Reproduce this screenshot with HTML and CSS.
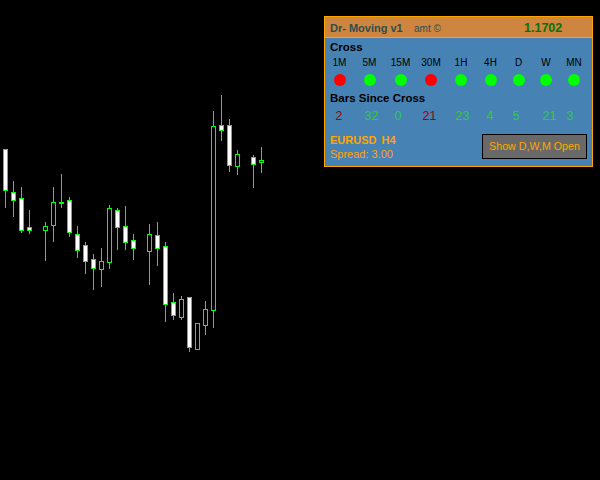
FILE: index.html
```html
<!DOCTYPE html>
<html>
<head>
<meta charset="utf-8">
<link rel="stylesheet" href="styles.css">
</head>
<body>
<svg class="chart" width="600" height="480" viewBox="0 0 600 480" xmlns="http://www.w3.org/2000/svg">
  <g stroke="#00ff00" stroke-width="1">
    <!-- wicks -->
    <line x1="5.5" y1="149" x2="5.5" y2="208"/>
    <line x1="13.5" y1="181" x2="13.5" y2="217"/>
    <line x1="21.5" y1="187" x2="21.5" y2="233"/>
    <line x1="29.5" y1="210" x2="29.5" y2="234"/>
    <line x1="45.5" y1="222" x2="45.5" y2="261"/>
    <line x1="53.5" y1="187" x2="53.5" y2="242"/>
    <line x1="61.5" y1="174" x2="61.5" y2="208"/>
    <line x1="69.5" y1="197" x2="69.5" y2="237"/>
    <line x1="77.5" y1="226" x2="77.5" y2="258"/>
    <line x1="85.5" y1="242" x2="85.5" y2="274"/>
    <line x1="93.5" y1="254" x2="93.5" y2="290"/>
    <line x1="101.5" y1="248" x2="101.5" y2="287"/>
    <line x1="109.5" y1="205" x2="109.5" y2="269"/>
    <line x1="117.5" y1="208" x2="117.5" y2="250"/>
    <line x1="125.5" y1="206" x2="125.5" y2="250"/>
    <line x1="133.5" y1="234" x2="133.5" y2="260"/>
    <line x1="149.5" y1="224" x2="149.5" y2="285"/>
    <line x1="157.5" y1="222" x2="157.5" y2="266"/>
    <line x1="165.5" y1="242" x2="165.5" y2="322"/>
    <line x1="173.5" y1="293" x2="173.5" y2="320"/>
    <line x1="181.5" y1="296" x2="181.5" y2="320"/>
    <line x1="189.5" y1="297" x2="189.5" y2="352"/>
    <line x1="197.5" y1="323" x2="197.5" y2="350"/>
    <line x1="205.5" y1="301" x2="205.5" y2="335"/>
    <line x1="213.5" y1="111" x2="213.5" y2="328"/>
    <line x1="221.5" y1="95" x2="221.5" y2="141"/>
    <line x1="229.5" y1="119" x2="229.5" y2="172"/>
    <line x1="237.5" y1="150" x2="237.5" y2="175"/>
    <line x1="253.5" y1="155" x2="253.5" y2="188"/>
    <line x1="261.5" y1="147" x2="261.5" y2="173"/>
    <!-- bodies: white = down, black = up -->
    <rect x="3.5" y="149.5" width="4" height="41" fill="#ffffff"/>
    <rect x="11.5" y="192.5" width="4" height="8" fill="#ffffff"/>
    <rect x="19.5" y="198.5" width="4" height="32" fill="#ffffff"/>
    <rect x="27.5" y="227.5" width="4" height="3" fill="#ffffff"/>
    <rect x="43.5" y="226.5" width="4" height="4" fill="#000000"/>
    <rect x="51.5" y="202.5" width="4" height="23" fill="#000000"/>
    <rect x="59.5" y="202.5" width="4" height="1" fill="#00ff00"/>
    <rect x="67.5" y="200.5" width="4" height="32" fill="#ffffff"/>
    <rect x="75.5" y="234.5" width="4" height="16" fill="#ffffff"/>
    <rect x="83.5" y="245.5" width="4" height="16" fill="#ffffff"/>
    <rect x="91.5" y="259.5" width="4" height="9" fill="#ffffff"/>
    <rect x="99.5" y="261.5" width="4" height="8" fill="#000000"/>
    <rect x="107.5" y="208.5" width="4" height="54" fill="#000000"/>
    <rect x="115.5" y="210.5" width="4" height="17" fill="#ffffff"/>
    <rect x="123.5" y="226.5" width="4" height="16" fill="#ffffff"/>
    <rect x="131.5" y="240.5" width="4" height="8" fill="#ffffff"/>
    <rect x="147.5" y="234.5" width="4" height="17" fill="#000000"/>
    <rect x="155.5" y="235.5" width="4" height="13" fill="#ffffff"/>
    <rect x="163.5" y="246.5" width="4" height="58" fill="#ffffff"/>
    <rect x="171.5" y="302.5" width="4" height="13" fill="#ffffff"/>
    <rect x="179.5" y="299.5" width="4" height="18" fill="#000000"/>
    <rect x="187.5" y="297.5" width="4" height="50" fill="#ffffff"/>
    <rect x="195.5" y="323.5" width="4" height="26" fill="#000000"/>
    <rect x="203.5" y="309.5" width="4" height="16" fill="#000000"/>
    <rect x="211.5" y="126.5" width="4" height="184" fill="#000000"/>
    <rect x="219.5" y="125.5" width="4" height="5" fill="#ffffff"/>
    <rect x="227.5" y="125.5" width="4" height="40" fill="#ffffff"/>
    <rect x="235.5" y="154.5" width="4" height="12" fill="#000000"/>
    <rect x="251.5" y="157.5" width="4" height="7" fill="#ffffff"/>
    <rect x="259.5" y="160.5" width="4" height="2" fill="#000000"/>
  </g>
</svg>

<div class="panel">
  <div class="head">
    <span class="title">Dr- Moving v1</span>
    <span class="amt">amt ©</span>
    <span class="price">1.1702</span>
  </div>
  <div class="body">
    <div class="sec">Cross</div>
    <div class="tf labels">
      <span>1M</span><span>5M</span><span>15M</span><span>30M</span><span>1H</span><span>4H</span><span>D</span><span>W</span><span>MN</span>
    </div>
    <div class="tf dots">
      <span><i class="dot red"></i></span>
      <span><i class="dot green"></i></span>
      <span><i class="dot green"></i></span>
      <span><i class="dot red"></i></span>
      <span><i class="dot green"></i></span>
      <span><i class="dot green"></i></span>
      <span><i class="dot green"></i></span>
      <span><i class="dot green"></i></span>
      <span><i class="dot green"></i></span>
    </div>
    <div class="sec sec2">Bars Since Cross</div>
    <div class="nums">
      <span class="dn">2</span><span class="up">32</span><span class="up">0</span><span class="dn">21</span><span class="up">23</span><span class="up">4</span><span class="up">5</span><span class="up">21</span><span class="up">3</span>
    </div>
    <div class="foot">
      <div class="sym">
        <div class="pair">EURUSD H4</div>
        <div class="spread">Spread: 3.00</div>
      </div>
      <button class="btn">Show D,W,M Open</button>
    </div>
  </div>
</div>
</body>
</html>
```

FILE: styles.css
```css
html, body {
  margin: 0;
  padding: 0;
  background: #000000;
  width: 600px;
  height: 480px;
  overflow: hidden;
  font-family: "Liberation Sans", Arial, sans-serif;
}

.chart {
  display: block;
}

.panel {
  position: absolute;
  left: 324px;
  top: 16px;
  width: 267px;
  height: 149px;
  border: 1px solid #ffa500;
  background: #4682b4;
  display: flex;
  flex-direction: column;
}

.head {
  box-sizing: border-box;
  border-bottom: 1px solid #ffa500;
  height: 21px;
  background: #cd853f;
  display: flex;
  align-items: baseline;
  padding: 3px 0 0 5px;
  line-height: 16px;
  color: #2f4f4f;
}

.title {
  width: 84px;
  font-size: 11px;
  font-weight: bold;
}

.amt {
  width: 110px;
  font-size: 10px;
}

.price {
  font-size: 12.5px;
  font-weight: bold;
  color: #0b700b;
}

.body {
  display: flex;
  flex-direction: column;
  padding-top: 2px;
}

.sec {
  padding-left: 5px;
  font-size: 11.5px;
  font-weight: bold;
  line-height: 14px;
  color: #000000;
}

.sec2 {
  margin-top: 5px;
}

.tf {
  display: grid;
  grid-template-columns: 29px 31px 31px 30px 30px 29px 27px 28px 28px;
}

.tf span {
  display: flex;
  justify-content: center;
}

.labels {
  margin-top: 3px;
  font-size: 10px;
  line-height: 12px;
  color: #000000;
}

.dots {
  margin-top: 5px;
  height: 12px;
}

.dot {
  display: block;
  width: 12px;
  height: 12px;
  border-radius: 50%;
}

.dot.red { background: #ff0000; }
.dot.green { background: #00ff00; }

.nums {
  margin-top: 4px;
  padding-left: 10.5px;
  display: grid;
  grid-template-columns: 29px 30px 28px 33px 31px 26px 30px 24px 20px;
  font-size: 12.5px;
  line-height: 14px;
}

.dn { color: #a00000; }
.up { color: #32cd32; }

.foot {
  margin-top: 10px;
  display: flex;
  justify-content: space-between;
  align-items: flex-start;
  padding-left: 5px;
  padding-right: 5px;
}

.pair {
  font-size: 11px;
  font-weight: bold;
  line-height: 14px;
  color: #ffa500;
  word-spacing: 2px;
}

.spread {
  font-size: 11px;
  line-height: 14px;
  color: #ffa500;
}

.btn {
  margin: 1px 0 0 0;
  width: 105px;
  height: 25px;
  box-sizing: border-box;
  padding: 0;
  background: #696969;
  border: 1px solid #000000;
  color: #ffa500;
  font-family: "Liberation Sans", Arial, sans-serif;
  font-size: 10.7px;
  line-height: 23px;
  text-align: center;
}
```
